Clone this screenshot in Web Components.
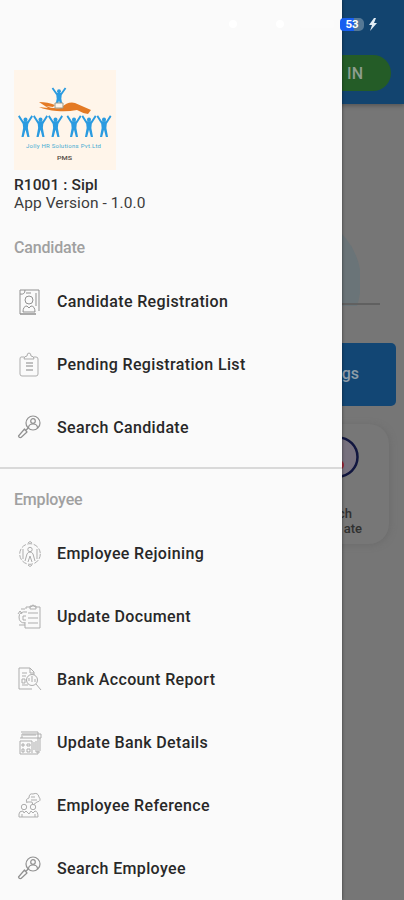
<!DOCTYPE html>
<html lang="en"><head><meta charset="utf-8"><title>PMS</title>
<style>html,body{margin:0;height:900px;overflow:hidden;background:#fafafa;font-family:Roboto,"Liberation Sans",sans-serif}</style></head><body>
<app-screen></app-screen>
<script>
const define=(name,html)=>customElements.define(name,class extends HTMLElement{
  constructor(){super();this.attachShadow({mode:'open'}).innerHTML=html;}
});

const person='<circle cx="0" cy="-8" r="2.4"/><path d="M-8-12-3-5H3L8-12" fill="none" stroke="#2b9be0" stroke-width="2.2"/><path d="M-3.600-6H3.600L2.800 1 4.800 11H2.200L0 3-2.200 11H-4.800L-2.800 1Z"/>';
define('brand-logo',`<style>:host{display:block;width:102px;height:100px;background:#fff5ea}svg{display:block}</style>
<svg width="102" height="100" viewBox="0 0 102 100"><g fill="#2b9be0">
${[11.500,26.500,41.500,60,75,90].map(x=>`<g transform="translate(${x} 57) scale(.84 .92)">${person}</g>`).join('')}
<g transform="translate(45 28) scale(.82 .84)">${person}</g></g>
<path d="M25 32Q34 32 41 35L39 37 32 36Q38 39 47 38 54 31 61 33L77 40 74 44Q68 43 63 40 53 42 43 41 32 40 25 37L34 38 25 32Z" fill="#e47a25"/>
<path d="M41 33H49V38H41Z" fill="#fff5ea" stroke="#9b9b8d" stroke-width="1"/>
<text x="12" y="78" font-family="Roboto" font-size="6" font-weight="400" fill="#45abd2" textLength="75">Jolly HR Solutions Pvt.Ltd</text>
<text x="43" y="90" font-family="Roboto" font-size="6" font-weight="500" fill="#504840" textLength="15" lengthAdjust="spacingAndGlyphs">PMS</text></svg>`);

const icons={
register:'<path d="M2 1H21V22M18 25H2V1M2 5Q7 6 7 1M8 4H13M18 4V17" /><circle cx="11" cy="11" r="4"/><path d="M5 23Q5 17 9 17L11 19 13 17Q17 17 17 23ZM2 25H18"/>',
list:'<path d="M6 5H3Q2 5 2 7V22Q2 24 4 24H18Q20 24 20 22V7Q20 5 18 5H16M6 7Q6 4 9 4 9 1 11 1T13 4Q16 4 16 7Z"/><path d="M8 11H15M8 14H15M8 18H15" stroke-width="1.500"/>',
search:'<circle cx="15" cy="8" r="7"/><circle cx="15" cy="6" r="2.300"/><path d="M10.500 13Q10.500 9 15 9T19.500 13M10 13 7.500 16M6.500 14 9 17 3 22.500Q1 23 .5 21Z"/>',
rejoin:'<circle cx="12" cy="13" r="10.300" stroke-dasharray="5 1.500"/><circle cx="12" cy="8.500" r="2.200"/><path d="M7 20 9 13Q10 11 12 11T15 13L17 20M12 15 10 21M12 15 14 21M5 8V18M19 8V18M10 2 12 .5 14 2M10 24 12 25.500 14 24"/>',
document:'<path d="M8 5V3H13Q15-1 17 3H22V24H7V18M12 5H18V2H12ZM10 9H20M10 14H20M10 19H20"/><path d="M9 8Q1 7 1 13T7 19M0 10 2 7 4 10M3 5H7M1 21H7M8 12H5V16H8"/>',
report:'<path d="M14 22H1V1H12L16 5V8M12 1V6H16M4 6H9M4 9H8M4 18H10"/><circle cx="14" cy="13" r="5.500"/><path d="M18 17 23 23M11 14V11M14 15V9M17 15V12M4 12H7V16H4Z"/>',
bank:'<path d="M3 2H20V24H2V11H14V23M2 8H23V4H4V8M5 5H18M22 8V21M18 11V22H22M4 14H6V16H4ZM9 14H12V16H9ZM4 19H6V22H4ZM9 19H12V22H9ZM16 12V20"/>',
reference:'<circle cx="6" cy="14" r="2.700"/><circle cx="15" cy="14" r="2.700"/><path d="M1 24V21Q1 18 5 18L6 20 8 18 11 21 13 18 15 20 17 18Q20 18 20 24ZM4 24V21M17 24V21M9 10Q7 6 11 5 11 0 15 1 20-1 21 4 24 8 19 9L15 12 14 9H9M13 4H17M13 7H19"/>'
};
customElements.define('line-icon',class extends HTMLElement{connectedCallback(){
 const n=this.getAttribute('name');
 this.attachShadow({mode:'open'}).innerHTML=`<style>:host{display:block;width:24px;height:26px}svg{display:block;overflow:visible}</style><svg width="24" height="26" viewBox="0 0 24 26" fill="none" stroke="${['register','search'].includes(n)?'#919191':'#adadad'}" stroke-width="${n==='search'?1.200:1}" stroke-linejoin="round">${icons[n]}</svg>`;
}});
customElements.define('menu-item',class extends HTMLElement{connectedCallback(){
 this.attachShadow({mode:'open'}).innerHTML=`<style>:host{display:flex;align-items:center;height:63px;padding-left:18px;gap:15px;box-sizing:border-box;font-size:16px;font-weight:500;line-height:20px;letter-spacing:.36px;color:#282828;white-space:nowrap}</style><line-icon name="${this.getAttribute('icon')}"></line-icon><span><slot></slot></span>`;
}});
define('menu-heading',`<style>:host{display:block;padding-left:14px;font-size:16px;line-height:20px;font-weight:500;letter-spacing:-.18px;color:#a0a0a0}</style><slot></slot>`);
define('account-info',`<style>:host{display:block;padding:70px 14px 0}.n{margin-top:6px;font-size:15.500px;font-weight:500;line-height:18px;color:#2b2b2b;letter-spacing:.08px}.v{font-size:15.500px;line-height:18px;color:#3c3c3c;letter-spacing:.09px}</style><brand-logo></brand-logo><div class="n">R1001 : Sipl</div><div class="v">App Version - 1.0.0</div>`);
define('nav-drawer',`<style>:host{display:block;width:342px;height:900px;background:#fafafa;box-shadow:0 0 3px #0008;overflow:hidden}menu-heading.a{margin:26px 0 12px}hr{border:0;height:2px;background:#d9d9d9;margin:8px 0 0}menu-heading.b{margin:21px 0 12px}</style>
<account-info></account-info><menu-heading class="a">Candidate</menu-heading>
<menu-item icon="register">Candidate Registration</menu-item><menu-item icon="list">Pending Registration List</menu-item><menu-item icon="search">Search Candidate</menu-item><hr>
<menu-heading class="b">Employee</menu-heading>
<menu-item icon="rejoin">Employee Rejoining</menu-item><menu-item icon="document">Update Document</menu-item><menu-item icon="report">Bank Account Report</menu-item><menu-item icon="bank">Update Bank Details</menu-item><menu-item icon="reference">Employee Reference</menu-item><menu-item icon="search">Search Employee</menu-item>`);
define('dimmed-home',`<style>:host{display:flex;flex-direction:column;align-items:flex-end;height:900px;background:#767676}
header{display:flex;width:100%;height:104px;justify-content:flex-end;box-sizing:border-box;padding:55px 13px 0 0;background:#12446f;box-shadow:0 2px 4px #0004}
.in{width:110px;height:36px;border-radius:18px;background:#245c27;color:#8d9d8d;font-size:16px;font-weight:500;line-height:37px;text-align:right;padding-right:28px;box-sizing:border-box}
.art{width:140px;height:84px;margin:118px 44px 0 0;display:block}.line{width:80px;height:2px;background:#606060;margin:-3px 24px 0 0}
.settings{width:120px;height:63px;border-radius:5px;margin:38px 8px 0 0;background:#124674;color:#8e9ca8;font-size:16px;font-weight:500;line-height:61px;text-align:right;padding-right:37px;box-sizing:border-box}
.card{width:90px;height:120px;border-radius:20px;margin:18px 15px 0 0;background:#777;box-shadow:1px 1px 6px #6669;color:#303030;display:flex;flex-direction:column;align-items:flex-end;box-sizing:border-box;padding:12px 27px 0 0;font-size:13px;line-height:15px;font-weight:500;text-align:right}
.card svg{margin:0 3px 28px 0}.first{margin-right:10px}</style>
<header><div class="in">IN</div></header>
<svg class="art" viewBox="0 0 140 84"><path d="M110 84V2Q138 21 141 55 141 72 137 84Z" fill="#6a7478" style="transform:translateX(0)"/></svg><div class="line"></div>
<div class="settings">gs</div><div class="card"><svg width="42" height="42" viewBox="0 0 42 42"><circle cx="21" cy="21" r="19.500" fill="#77717e" stroke="#11163f" stroke-width="2.500"/><circle cx="22" cy="29" r="5" fill="#9c2437"/></svg><span class="first">ch</span><span>ate</span></div>`);
define('battery-status',`<style>:host{display:flex;align-items:center;gap:5px;height:13px}.b{width:24px;height:13px;border-radius:4px 5px 5px 4px;background:linear-gradient(90deg,#175ff0 0 14px,#557895 14px);color:#fff;font-size:11.500px;font-weight:700;line-height:13px;text-align:center}</style><div class="b">53</div><svg width="8" height="13" viewBox="0 0 8 13"><path d="M5 0 0 7H3L1 13 8 5H5L7 0Z" fill="#e2edf5"/></svg>`);
define('app-screen',`<style>:host{display:block;position:relative;width:404px;height:900px;overflow:hidden}nav-drawer{position:absolute;left:0;top:0}battery-status{position:absolute;left:340px;top:18px}.dots{position:absolute;left:228px;top:19px;fill:#fff}</style><dimmed-home></dimmed-home><nav-drawer></nav-drawer><svg class="dots" width="110" height="10"><circle cx="5" cy="5" r="4"/><circle cx="52" cy="5" r="4"/><rect x="72" y="1" width="34" height="8" rx="3" opacity=".3"/></svg><battery-status></battery-status>`);
</script></body></html>
